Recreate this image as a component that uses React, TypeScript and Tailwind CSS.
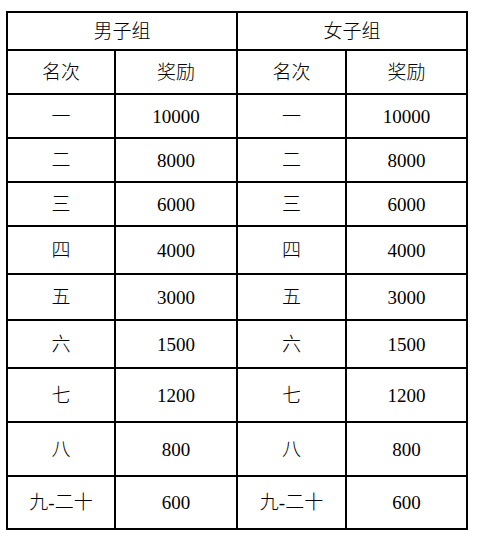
import { Fragment } from "react";

const rows = [
  { rank: "一", prize: "10000", h: "h-[42px]" },
  { rank: "二", prize: "8000", h: "h-[42px]" },
  { rank: "三", prize: "6000", h: "h-[42px]" },
  { rank: "四", prize: "4000", h: "h-[46px]" },
  { rank: "五", prize: "3000", h: "h-[44px]" },
  { rank: "六", prize: "1500", h: "h-[46px]" },
  { rank: "七", prize: "1200", h: "h-[52px]" },
  { rank: "八", prize: "800", h: "h-[52px]" },
  { rank: "九-二十", prize: "600", h: "h-[51px]" },
];

function Cell({ children, className = "" }: { children: React.ReactNode; className?: string }) {
  return (
    <div className={`bg-white flex items-center justify-center ${className}`}>
      {children}
    </div>
  );
}

export default function App() {
  return (
    <div
      className="min-h-[538px] bg-white pt-[11px] pl-[6px] text-[19px] font-light text-black leading-none"
      style={{ fontFamily: "'Liberation Serif', 'Noto Sans CJK SC', serif" }}
    >
      <div className="inline-grid grid-cols-[106px_120px_107px_119px] gap-[2px] bg-black p-[2px]">
        {/* group headers */}
        <Cell className="col-span-2 h-[36px]">男子组</Cell>
        <Cell className="col-span-2 h-[36px]">女子组</Cell>

        {/* column headers */}
        <Cell className="h-[42px]">名次</Cell>
        <Cell className="h-[42px]">奖励</Cell>
        <Cell className="h-[42px]">名次</Cell>
        <Cell className="h-[42px]">奖励</Cell>

        {rows.map((r) => (
          <Fragment key={r.rank}>
            <Cell className={r.h}>{r.rank}</Cell>
            <Cell className={r.h}>{r.prize}</Cell>
            <Cell className={r.h}>{r.rank}</Cell>
            <Cell className={r.h}>{r.prize}</Cell>
          </Fragment>
        ))}
      </div>
    </div>
  );
}
